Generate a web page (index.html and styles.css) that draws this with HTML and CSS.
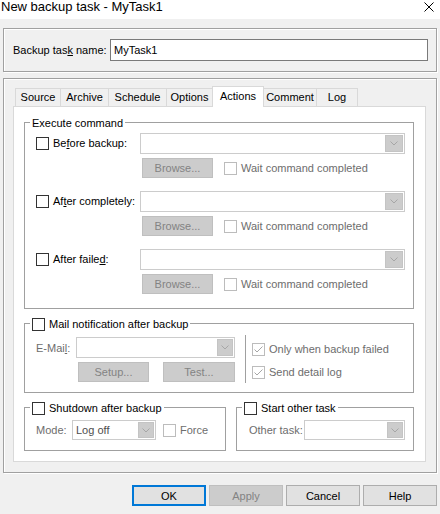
FILE: index.html
```html
<!DOCTYPE html>
<html lang="en">

<head>
  <meta charset="UTF-8">
  <title>New backup task - MyTask1</title>
  <link rel="stylesheet" href="styles.css">
</head>

<body>
  <div class="titlebar">
    <span class="title">New backup task - MyTask1</span>
    <svg class="close" width="10" height="10" viewBox="0 0 10 10"><path d="M0.5 0.5L9.5 9.5M9.5 0.5L0.5 9.5" stroke="#000" stroke-width="1" fill="none"/></svg>
  </div>

  <div class="panel name-panel">
    <span class="name-label">Backup tas<u>k</u> name:</span>
    <div class="edit">MyTask1</div>
  </div>

  <div class="panel tabs-panel">
    <div class="tabs">
      <div class="tab" style="width:46px">Source</div>
      <div class="tab" style="width:49px">Archive</div>
      <div class="tab" style="width:59px">Schedule</div>
      <div class="tab" style="width:47px">Options</div>
      <div class="tab active" style="width:52px">Actions</div>
      <div class="tab" style="width:54px">Comment</div>
      <div class="tab" style="width:42px">Log</div>
    </div>

    <div class="page">
      <!-- execute command -->
      <div class="group exec">
        <div class="group-title">Execute command</div>
        <div class="cmds">
          <div class="cmd">
            <label class="check"><span class="box"></span><span class="text">Be<u>f</u>ore backup:</span></label>
            <div class="combo"><span class="drop"><svg width="8" height="5" viewBox="0 0 8 5"><path d="M0.5 0.5L4 4L7.5 0.5" stroke="#a6a6a6" fill="none"/></svg></span></div>
            <div class="sub">
              <button class="btn off browse">Browse...</button>
              <label class="check off"><span class="box"></span><span class="text">Wait command completed</span></label>
            </div>
          </div>
          <div class="cmd">
            <label class="check"><span class="box"></span><span class="text">Af<u>t</u>er completely:</span></label>
            <div class="combo"><span class="drop"><svg width="8" height="5" viewBox="0 0 8 5"><path d="M0.5 0.5L4 4L7.5 0.5" stroke="#a6a6a6" fill="none"/></svg></span></div>
            <div class="sub">
              <button class="btn off browse">Browse...</button>
              <label class="check off"><span class="box"></span><span class="text">Wait command completed</span></label>
            </div>
          </div>
          <div class="cmd">
            <label class="check"><span class="box"></span><span class="text">After faile<u>d</u>:</span></label>
            <div class="combo"><span class="drop"><svg width="8" height="5" viewBox="0 0 8 5"><path d="M0.5 0.5L4 4L7.5 0.5" stroke="#a6a6a6" fill="none"/></svg></span></div>
            <div class="sub">
              <button class="btn off browse">Browse...</button>
              <label class="check off"><span class="box"></span><span class="text">Wait command completed</span></label>
            </div>
          </div>
        </div>
      </div>

      <!-- mail -->
      <div class="group mail">
        <label class="group-title check"><span class="box"></span><span class="text">Mail notification after backup</span></label>
        <div class="mail-body">
          <div class="mail-left">
            <span class="muted">E-Mai<u>l</u>:</span>
            <div class="combo"><span class="drop"><svg width="8" height="5" viewBox="0 0 8 5"><path d="M0.5 0.5L4 4L7.5 0.5" stroke="#a6a6a6" fill="none"/></svg></span></div>
            <div class="mail-btns">
              <button class="btn off setup">Setup...</button>
              <button class="btn off test">Test...</button>
            </div>
          </div>
          <div class="sep"></div>
          <div class="mail-right">
            <label class="check off"><span class="box"><svg width="11" height="11" viewBox="0 0 11 11"><path d="M1.5 5.5L4 8L9.5 2.5" stroke="#a6a6a6" fill="none"/></svg></span><span class="text">Only when backup failed</span></label>
            <label class="check off"><span class="box"><svg width="11" height="11" viewBox="0 0 11 11"><path d="M1.5 5.5L4 8L9.5 2.5" stroke="#a6a6a6" fill="none"/></svg></span><span class="text">Send detail log</span></label>
          </div>
        </div>
      </div>

      <!-- shutdown / other task -->
      <div class="bottom">
        <div class="group shut">
          <label class="group-title check"><span class="box"></span><span class="text">Shutdown after backup</span></label>
          <div class="row-body">
            <span class="muted mode-label">Mode:</span>
            <div class="combo mode"><span class="value">Log off</span><span class="drop"><svg width="8" height="5" viewBox="0 0 8 5"><path d="M0.5 0.5L4 4L7.5 0.5" stroke="#a6a6a6" fill="none"/></svg></span></div>
            <label class="check off force"><span class="box"></span><span class="text">Force</span></label>
          </div>
        </div>
        <div class="group other">
          <label class="group-title check"><span class="box"></span><span class="text">Start other task</span></label>
          <div class="row-body">
            <span class="muted other-label">Other task:</span>
            <div class="combo other-combo"><span class="drop"><svg width="8" height="5" viewBox="0 0 8 5"><path d="M0.5 0.5L4 4L7.5 0.5" stroke="#a6a6a6" fill="none"/></svg></span></div>
          </div>
        </div>
      </div>
    </div>
  </div>

  <div class="buttons">
    <button class="btn default">OK</button>
    <button class="btn off">Apply</button>
    <button class="btn">Cancel</button>
    <button class="btn">Help</button>
  </div>
</body>

</html>
```

FILE: styles.css
```css
* {
  box-sizing: border-box;
}

body {
  margin: 0;
  width: 440px;
  height: 514px;
  overflow: hidden;
  background-color: #f0f0f0;
  font-family: "Liberation Sans", Arial, sans-serif;
  font-size: 11px;
  color: #000;
}

u {
  text-decoration-thickness: 1px;
  text-underline-offset: 1px;
}

.titlebar {
  display: flex;
  justify-content: space-between;
  align-items: flex-start;
  height: 19px;
  background-color: #fff;
}

.titlebar .title {
  padding-left: 1px;
  font-size: 13px;
  line-height: 14px;
}

.titlebar .close {
  margin: 2px 6px 0 0;
}

.panel {
  margin: 0 3px;
  border: 1px solid #a0a0a0;
  box-shadow: inset 1px 1px 0 #fff, 1px 1px 0 #fff;
}

.name-panel {
  display: flex;
  align-items: center;
  height: 44px;
  margin-top: 9px;
  padding: 10px 0 10px 9px;
}

.name-label {
  width: 97px;
}

.edit {
  width: 318px;
  height: 22px;
  padding-left: 3px;
  line-height: 20px;
  border: 1px solid #7a7a7a;
  background-color: #fff;
}

.tabs-panel {
  height: 395px;
  margin-top: 6px;
  padding: 7px 10px 10px 9px;
}

.tabs {
  display: flex;
  align-items: flex-start;
  height: 20px;
  padding-left: 2px;
}

.tab {
  height: 18px;
  margin-top: 2px;
  margin-right: -1px;
  border: 1px solid #d9d9d9;
  border-bottom: none;
  background-color: #f0f0f0;
  text-align: center;
  line-height: 17px;
}

.tab.active {
  position: relative;
  z-index: 1;
  height: 21px;
  margin-top: 0;
  background-color: #fff;
  line-height: 18px;
}

.page {
  height: 356px;
  padding: 0 11px 0 10px;
  border: 1px solid #d9d9d9;
  background-color: #fff;
}

.group {
  border: 1px solid #a0a0a0;
}

.group-title {
  display: flex;
  align-items: center;
  width: fit-content;
  height: 14px;
  margin: -7px 0 0 5px;
  padding: 0 2px;
  background-color: #fff;
}

.check {
  display: flex;
  align-items: center;
  gap: 4px;
  line-height: 13px;
}

.check .text {
  white-space: nowrap;
}

.box {
  display: flex;
  align-items: center;
  justify-content: center;
  flex: none;
  width: 13px;
  height: 13px;
  border: 1px solid #333;
  background-color: #fff;
}

.check.off {
  color: #6d6d6d;
}

.check.off .box {
  border-color: #bcbcbc;
}

.muted {
  color: #6d6d6d;
}

.combo {
  display: flex;
  align-items: center;
  justify-content: flex-end;
  padding-right: 1px;
  border: 1px solid #cccccc;
  background-color: #fff;
}

.drop {
  display: flex;
  align-items: center;
  justify-content: center;
  width: 18px;
  height: 17px;
  border: 1px solid #c4c4c4;
  background-color: #cccccc;
}

.btn {
  width: 74px;
  height: 21px;
  padding: 0;
  border: 1px solid #adadad;
  background-color: #e1e1e1;
  font: inherit;
  color: #000;
}

.btn.default {
  border: 2px solid #0078d7;
}

.btn.off {
  border-color: #bfbfbf;
  background-color: #cccccc;
  color: #838383;
}

/* execute command */
.exec {
  height: 187px;
  margin-top: 15px;
}

.cmds {
  display: flex;
  flex-direction: column;
  gap: 13px;
  margin-top: 3px;
  padding-left: 11px;
}

.cmd {
  display: grid;
  grid-template-columns: 104px 265px;
  grid-template-rows: 21px 20px;
  row-gap: 4px;
}

.cmd .sub {
  grid-column: 2;
  display: flex;
  align-items: center;
  padding-left: 2px;
}

.btn.browse {
  width: 71px;
  height: 20px;
  margin-right: 11px;
}

/* mail */
.mail {
  height: 70px;
  margin-top: 14px;
}

.mail-body {
  display: flex;
  margin-top: 6px;
  padding-left: 11px;
}

.mail-left {
  display: grid;
  grid-template-columns: 40px 159px;
  grid-template-rows: 21px 20px;
  row-gap: 4px;
  align-items: center;
}

.mail-left .combo {
  height: 21px;
}

.mail-left .drop {
  width: 16px;
}

.mail-btns {
  grid-column: 1 / 3;
  display: flex;
  gap: 14px;
  padding-left: 42px;
}

.btn.setup {
  width: 71px;
  height: 20px;
}

.btn.test {
  width: 72px;
  height: 20px;
}

.sep {
  width: 1px;
  height: 48px;
  margin: -2px 6px 0 10px;
  background-color: #a0a0a0;
}

.mail-right {
  display: flex;
  flex-direction: column;
  gap: 10px;
  padding-top: 6px;
}

/* shutdown and other task */
.bottom {
  display: flex;
  gap: 10px;
  margin-top: 14px;
}

.shut {
  width: 202px;
  height: 44px;
}

.other {
  width: 178px;
  height: 44px;
}

.row-body {
  display: flex;
  align-items: center;
  height: 20px;
  margin-top: 5px;
  padding-left: 11px;
}

.mode-label {
  width: 36px;
}

.combo.mode {
  justify-content: space-between;
  width: 84px;
  height: 20px;
  padding-left: 3px;
}

.combo.mode .value {
  color: #4d4d4d;
}

.combo.mode .drop,
.other-combo .drop {
  width: 16px;
  height: 16px;
}

.force {
  margin-left: 7px;
}

.other .row-body {
  padding-left: 12px;
}

.other-label {
  width: 55px;
}

.other-combo {
  width: 101px;
  height: 20px;
}

.buttons {
  display: flex;
  justify-content: flex-end;
  gap: 3px;
  padding: 12px 3px 0 0;
}
```
